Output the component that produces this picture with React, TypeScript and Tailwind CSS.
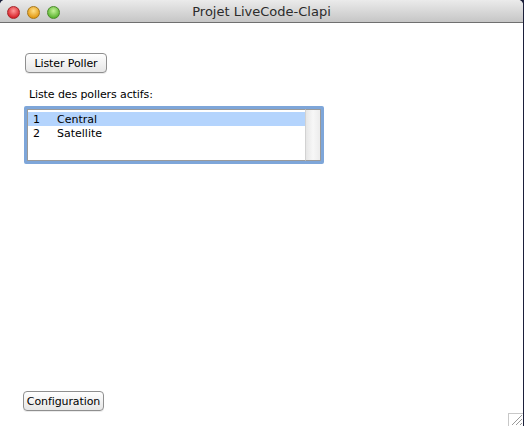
import React from "react";

const font = { fontFamily: '"Lucida Grande", "DejaVu Sans", sans-serif' };

const Light = ({ from, to, border }: { from: string; to: string; border: string }) => (
  <div
    className="w-[13px] h-[13px] rounded-full"
    style={{
      background: `radial-gradient(circle at 50% 35%, ${from} 0%, ${to} 75%)`,
      border: `1px solid ${border}`,
    }}
  />
);

const MacButton = ({ children, className }: { children: React.ReactNode; className: string }) => (
  <button
    className={`h-[20px] rounded-[4px] border border-[#8f8f8f] bg-gradient-to-b from-white to-[#e6e6e6] text-[11px] tracking-[-0.1px] text-black leading-none shadow-[0_1px_0_rgba(0,0,0,0.08)] ${className}`}
  >
    {children}
  </button>
);

export default function App() {
  const rows = [
    { n: "1", name: "Central", selected: true },
    { n: "2", name: "Satellite", selected: false },
  ];
  return (
    <div className="w-[524px] h-[426px] flex bg-[#1b1f3a]" style={font}>
      <div className="w-[523px] h-[426px] flex flex-col bg-white rounded-t-[5px] overflow-hidden">
        {/* title bar */}
        <div className="relative h-[23px] flex items-center bg-gradient-to-b from-[#ebebeb] to-[#c6c6c6] border-b border-[#6f6f6f]">
          <div className="flex gap-[7px] pl-[7px] pt-[3px]">
            <Light from="#ff9a9a" to="#d8232a" border="#a5262a" />
            <Light from="#ffe08a" to="#e39a14" border="#a8771a" />
            <Light from="#c5f29a" to="#5cb531" border="#4a8a2a" />
          </div>
          <div className="absolute inset-0 flex items-center justify-center text-[13px] text-[#2b2b2b] pt-[1px]">
            Projet LiveCode-Clapi
          </div>
        </div>

        {/* body */}
        <div className="flex-1 flex flex-col pb-[14px]">
          <div className="flex pt-[30px] pl-[25px]">
            <MacButton className="w-[82px]">Lister Poller</MacButton>
          </div>
          <div className="pl-[29px] pt-[16px] text-[11px] tracking-[-0.1px] text-black leading-none">
            Liste des pollers actifs:
          </div>
          <div className="ml-[24px] mt-[6px] w-[300px] h-[58px] border-[3px] border-[#7ea6d9] rounded-[2px] flex bg-white">
            <div className="flex-1 border border-[#9a9a9a] border-r-0 pt-[2px]">
              {rows.map((r) => (
                <div
                  key={r.n}
                  className={`h-[14px] flex items-center text-[11px] leading-none text-black ${
                    r.selected ? "bg-[#b4d4fd]" : ""
                  }`}
                >
                  <span className="w-[29px] pl-[5px]">{r.n}</span>
                  <span>{r.name}</span>
                </div>
              ))}
            </div>
            <div className="w-[16px] bg-gradient-to-r from-[#e6e6e6] via-[#f7f7f7] to-[#ececec] border-l border-[#d2d2d2] border-y border-y-[#9a9a9a] border-r border-r-[#9a9a9a]" />
          </div>
          <div className="flex-1" />
          <div className="pl-[23px] flex items-end justify-between">
            <MacButton className="w-[81px] mb-[1px]">Configuration</MacButton>
            <svg width="15" height="13" viewBox="0 0 15 13" className="mb-[-14px]">
              <rect x="0.5" y="0.5" width="15" height="13" fill="white" stroke="#c8c8c8" />
              <path d="M4 12 L14 2 M8 12 L14 6 M12 12 L14 10" stroke="#9a9a9a" strokeWidth="1" />
            </svg>
          </div>
        </div>
      </div>
    </div>
  );
}
